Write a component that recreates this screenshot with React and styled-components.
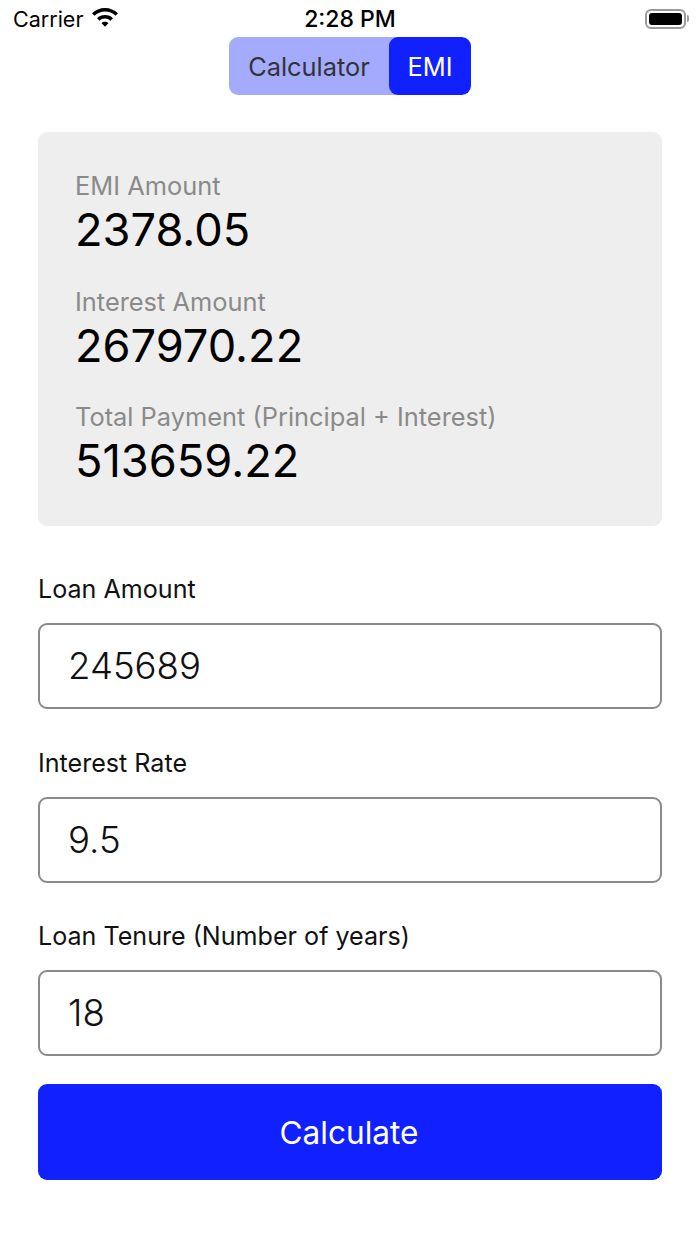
import React from 'react'
import styled, { createGlobalStyle } from 'styled-components'

const GlobalStyle = createGlobalStyle`
    html, body {
        margin: 0;
        padding: 0;
        background: #fff;
        font-family: Inter, "Liberation Sans", sans-serif;
    }
`

const results = [
    { label: 'EMI Amount', value: '2378.05' },
    { label: 'Interest Amount', value: '267970.22' },
    { label: 'Total Payment (Principal + Interest)', value: '513659.22' },
]

const fields = [
    { label: 'Loan Amount', value: '245689' },
    { label: 'Interest Rate', value: '9.5' },
    { label: 'Loan Tenure (Number of years)', value: '18' },
]

const App = () => {
    return (
        <Page>
            <GlobalStyle />
            <StatusBar>
                <Carrier>
                    Carrier
                    <svg width="28" height="20" viewBox="0 0 28 20">
                        <path d="M14 1c5 0 9.600 2 13 5.200l-2.500 2.600A15.200 15.200 0 0 0 14 4.600c-4 0-7.700 1.600-10.500 4.200L1 6.200C4.400 3 9 1 14 1z" fill="#000" />
                        <path d="M14 8c3.100 0 5.900 1.200 8 3.200l-2.600 2.600A7.800 7.800 0 0 0 14 11.600c-2.100 0-4 .8-5.400 2.200L6 11.200C8.100 9.200 10.900 8 14 8z" fill="#000" />
                        <path d="M14 14.800c1.300 0 2.500.5 3.400 1.400L14 19.800l-3.400-3.600c.9-.9 2.100-1.400 3.400-1.400z" fill="#000" />
                    </svg>
                </Carrier>
                <Clock>2:28 PM</Clock>
                <Battery>
                    <BatteryBody><BatteryFill /></BatteryBody>
                    <BatteryCap />
                </Battery>
            </StatusBar>

            <Tabs>
                <Tab>Calculator</Tab>
                <Tab $active>EMI</Tab>
            </Tabs>

            <Content>
                <ResultCard>
                    {results.map((r) => (
                        <Result key={r.label}>
                            <ResultLabel>{r.label}</ResultLabel>
                            <ResultValue>{r.value}</ResultValue>
                        </Result>
                    ))}
                </ResultCard>

                {fields.map((f) => (
                    <Field key={f.label}>
                        <FieldLabel>{f.label}</FieldLabel>
                        <Input defaultValue={f.value} />
                    </Field>
                ))}

                <CalcButton>Calculate</CalcButton>
            </Content>
        </Page>
    )
}

const Page = styled.div`
    width: 700px;
    height: 1244px;
    overflow: hidden;
    background: #fff;
`

const StatusBar = styled.div`
    height: 37px;
    padding: 0 13px;
    box-sizing: border-box;
    display: grid;
    grid-template-columns: 1fr auto 1fr;
    align-items: center;
    color: #000;
`

const Carrier = styled.div`
    display: flex;
    align-items: center;
    gap: 8px;
    font-size: 21.5px;
    svg {
        margin-top: -3px;
    }
`

const Clock = styled.div`
    font-size: 23px;
    font-weight: 500;
`

const Battery = styled.div`
    display: flex;
    align-items: center;
    justify-content: flex-end;
    margin-right: -2px;
`

const BatteryBody = styled.div`
    width: 41px;
    height: 20px;
    box-sizing: border-box;
    border: 2px solid #9a9a9a;
    border-radius: 6px;
    padding: 2px;
`

const BatteryFill = styled.div`
    height: 100%;
    background: #000;
    border-radius: 3px;
`

const BatteryCap = styled.div`
    width: 2px;
    height: 7px;
    margin-left: 1px;
    background: #9a9a9a;
    border-radius: 0 2px 2px 0;
`

const Tabs = styled.div`
    display: flex;
    width: 242px;
    height: 58px;
    margin: 0 auto;
    background: #a4abff;
    border-radius: 9px;
    overflow: hidden;
`

const Tab = styled.div`
    flex: ${(p) => (p.$active ? '0 0 82px' : '1')};
    display: flex;
    align-items: center;
    justify-content: center;
    font-size: 25.4px;
    color: ${(p) => (p.$active ? '#fff' : '#333')};
    background: ${(p) => (p.$active ? '#1020ff' : 'transparent')};
    border-radius: ${(p) => (p.$active ? '9px' : '0')};
`

const Content = styled.div`
    padding: 37px 38px 0;
`

const ResultCard = styled.div`
    height: 394px;
    box-sizing: border-box;
    padding: 39px 37px 0;
    background: #eeeeee;
    border-radius: 9px;
    display: flex;
    flex-direction: column;
    gap: 27.5px;
    margin-bottom: 46px;
`

const Result = styled.div`
    display: flex;
    flex-direction: column;
`

const ResultLabel = styled.div`
    font-size: 25.4px;
    line-height: 30px;
    color: #8a8a8a;
`

const ResultValue = styled.div`
    font-size: 45.2px;
    line-height: 58px;
    color: #000;
`

const Field = styled.div`
    margin-bottom: 36.5px;
    &:last-of-type {
        margin-bottom: 28px;
    }
`

const FieldLabel = styled.div`
    font-size: 25.1px;
    line-height: 34px;
    color: #111;
    margin-bottom: 17px;
`

const Input = styled.input`
    display: block;
    width: 100%;
    height: 86px;
    box-sizing: border-box;
    padding: 0 28px;
    border: 2px solid #8a8a8a;
    border-radius: 9px;
    background: #fff;
    font-family: inherit;
    font-size: 36.6px;
    font-weight: 300;
    color: #111;
    outline: none;
`

const CalcButton = styled.button`
    display: block;
    width: 100%;
    height: 96px;
    padding: 0 2px 0 0;
    border: 0;
    border-radius: 9px;
    background: #1020ff;
    color: #fff;
    font-family: inherit;
    font-size: 31.6px;
    cursor: pointer;
`

export default App
